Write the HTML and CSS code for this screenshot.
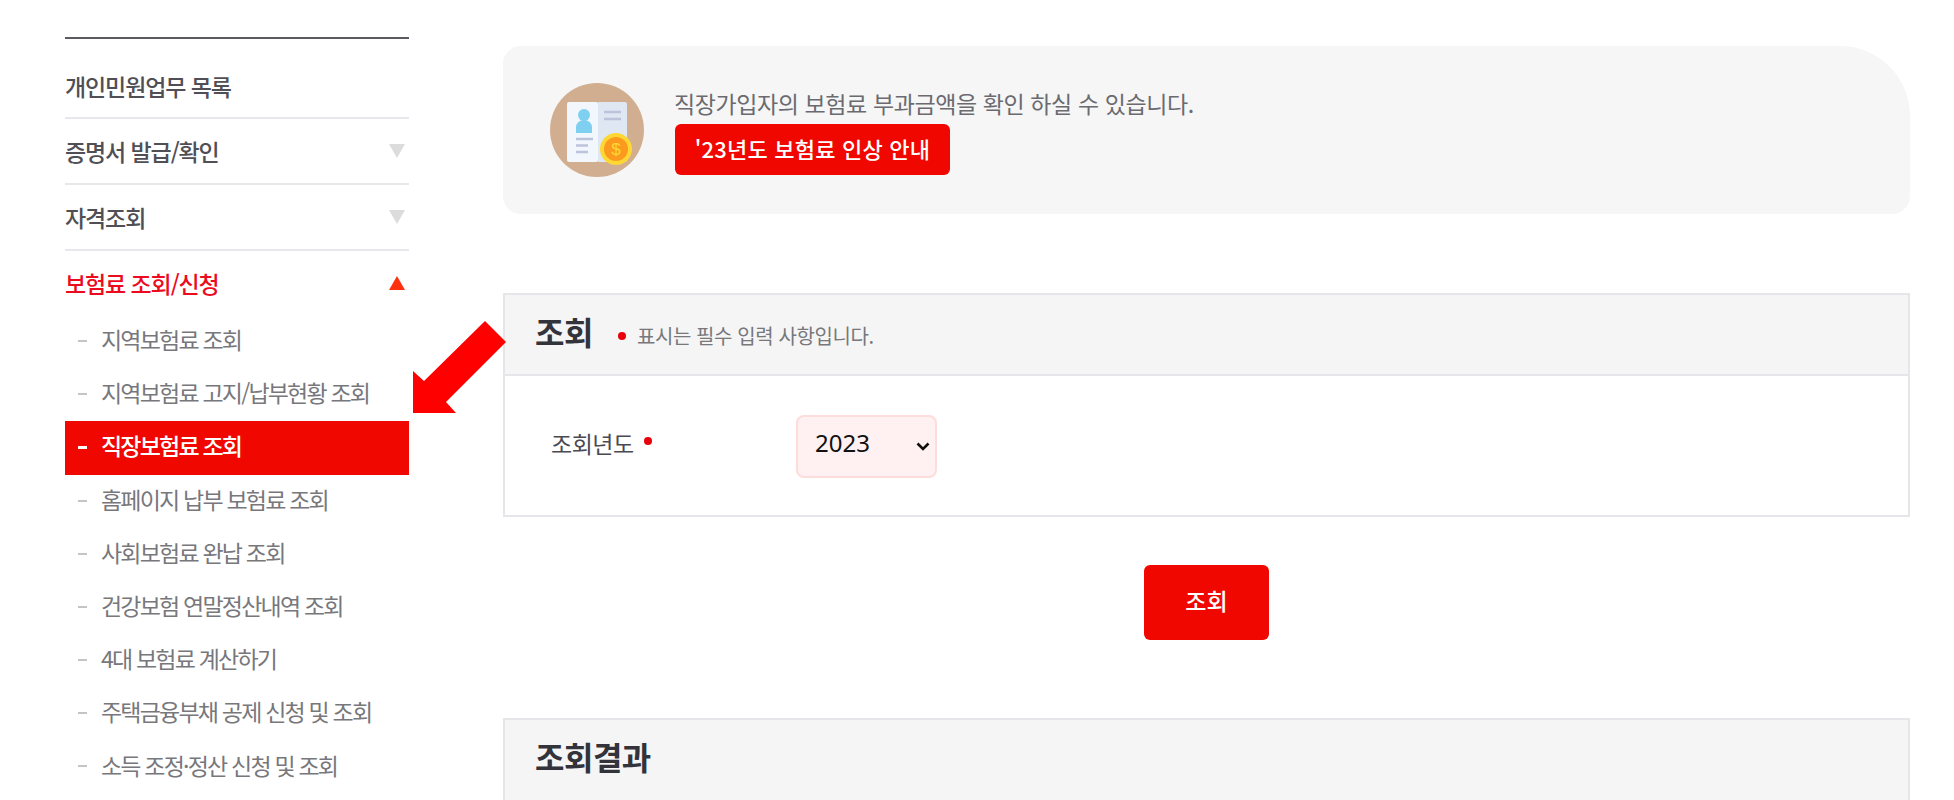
FILE: index.html
```html
<!DOCTYPE html>
<html lang="ko">
<head>
    <meta charset="UTF-8">
    <meta name="viewport" content="width=device-width, initial-scale=1.0">
    <title>직장보험료 조회</title>
    <link rel="stylesheet" href="styles.css">
</head>
<body>
    <div class="page">
        <nav class="sidebar">
            <div class="menu-title">개인민원업무 목록</div>
            <div class="menu-item">증명서 발급/확인<span class="tri tri-down"></span></div>
            <div class="menu-item">자격조회<span class="tri tri-down"></span></div>
            <div class="menu-item menu-open">보험료 조회/신청<span class="tri tri-up"></span></div>
            <ul class="submenu">
                <li>지역보험료 조회</li>
                <li>지역보험료 고지/납부현황 조회</li>
                <li class="active">직장보험료 조회</li>
                <li>홈페이지 납부 보험료 조회</li>
                <li>사회보험료 완납 조회</li>
                <li>건강보험 연말정산내역 조회</li>
                <li>4대 보험료 계산하기</li>
                <li>주택금융부채 공제 신청 및 조회</li>
                <li>소득 조정·정산 신청 및 조회</li>
            </ul>
        </nav>

        <main class="content">
            <div class="banner">
                <svg class="banner-icon" width="94" height="94" viewBox="0 0 94 94">
                    <circle cx="47" cy="47" r="47" fill="#d2ae90"/>
                    <rect x="17" y="19" width="31" height="60" rx="2" fill="#f2f7fd"/>
                    <path d="M48 19h27a2 2 0 0 1 2 2v56a2 2 0 0 1-2 2H48z" fill="#dfe7f3"/>
                    <circle cx="34" cy="32" r="6" fill="#7fd0f0"/>
                    <path d="M26 50v-6c0-4 4-7 8-7s8 3 8 7v6z" fill="#7fd0f0"/>
                    <path d="M26 56h17M26 62.500h12M26 69h12" stroke="#bcc3da" stroke-width="2.500"/>
                    <path d="M54 29h17M54 36h17" stroke="#bcc3da" stroke-width="2.500"/>
                    <circle cx="66" cy="66" r="16" fill="#fdd835"/>
                    <circle cx="66" cy="66" r="12" fill="#fb9a1e"/>
                    <text class="coin-mark" x="66" y="72" text-anchor="middle">$</text>
                </svg>
                <div class="banner-body">
                    <p class="banner-text">직장가입자의 보험료 부과금액을 확인 하실 수 있습니다.</p>
                    <a class="banner-btn">'23년도 보험료 인상 안내</a>
                </div>
            </div>

            <section class="panel search-panel">
                <div class="panel-head">
                    <h3>조회</h3>
                    <span class="required-note"><i class="dot"></i>표시는 필수 입력 사항입니다.</span>
                </div>
                <div class="panel-row">
                    <label class="field-label" for="year">조회년도<i class="dot"></i></label>
                    <select class="year-select" id="year">
                        <option>2023</option>
                    </select>
                </div>
            </section>

            <div class="actions">
                <button class="search-btn">조회</button>
            </div>

            <section class="panel result-panel">
                <div class="panel-head">
                    <h3>조회결과</h3>
                </div>
            </section>
        </main>

        <svg class="pointer" width="94" height="94" viewBox="0 0 94 94">
            <path d="M72 0 93 21 33 81 43 92H0V50L11 60z" fill="#ff0000"/>
        </svg>
    </div>
</body>
</html>
```

FILE: styles.css
```css
* {
    box-sizing: border-box;
}
body {
    margin: 0;
    background: #fff;
    color: #555;
    font-family: "Noto Sans CJK KR", "Noto Sans", sans-serif;
}
.page {
    position: relative;
    display: flex;
    height: 800px;
    overflow: hidden;
    padding-left: 65px;
}
.sidebar {
    width: 344px;
    flex-shrink: 0;
    margin-top: 37px;
    border-top: 2px solid #5a5a60;
}
.menu-title, .menu-item {
    display: flex;
    justify-content: space-between;
    align-items: center;
    height: 66px;
    font-size: 23px;
    font-weight: 500;
    letter-spacing: -1.1px;
    color: #4f4f55;
    border-bottom: 2px solid #e8e8ec;
    padding-right: 4px;
}
.menu-title {
    height: 80px;
    padding-top: 16px;
}
.menu-open {
    color: #ec0a1e;
    border-bottom: none;
    padding-bottom: 3px;
}
.tri {
    width: 0;
    height: 0;
    border-left: 8px solid transparent;
    border-right: 8px solid transparent;
}
.tri-down {
    border-top: 14px solid #dcdcdc;
}
.tri-up {
    border-bottom: 14px solid #ff3010;
}
.submenu {
    list-style: none;
    margin: -2px 0 0;
    padding: 0;
}
.submenu li {
    display: flex;
    align-items: center;
    height: 53.2px;
    padding: 0 0 5px 36px;
    position: relative;
    font-size: 23px;
    letter-spacing: -1.8px;
    color: #77777c;
}
.submenu li::before {
    content: "";
    position: absolute;
    left: 13px;
    top: 47%;
    width: 9px;
    height: 2px;
    background: #c4c4c4;
}
.submenu li.active {
    background: #f00800;
    color: #fff;
    font-weight: 500;
}
.submenu li.active::before {
    background: #fff;
    height: 3px;
}
.content {
    width: 1407px;
    flex-shrink: 0;
    margin-left: 94px;
    padding-top: 46px;
}
.banner {
    display: flex;
    align-items: center;
    height: 168px;
    padding-left: 47px;
    background: #f6f6f6;
    border-radius: 18px 70px 18px 18px;
}
.banner-icon {
    flex-shrink: 0;
}
.coin-mark {
    font-size: 17px;
    font-family: "Liberation Sans", sans-serif;
    fill: #fdd835;
}
.banner-body {
    margin-left: 30px;
}
.banner-text {
    margin: 0 0 4px;
    font-size: 23px;
    line-height: 34px;
    letter-spacing: -0.4px;
    color: #6a6a70;
}
.banner-btn {
    display: inline-block;
    width: 275px;
    height: 51px;
    margin-left: 1px;
    line-height: 48px;
    text-align: center;
    background: #f00800;
    color: #fff;
    font-size: 22px;
    font-weight: 500;
    letter-spacing: 0.2px;
    border-radius: 6px;
}
.panel {
    border: 2px solid #e6e6ea;
}
.search-panel {
    margin-top: 79px;
}
.panel-head {
    display: flex;
    align-items: center;
    height: 79px;
    padding-left: 30px;
    background: #f5f5f5;
}
.result-panel .panel-head {
    height: 100px;
    padding-bottom: 21px;
}
.panel-head h3 {
    margin: 0;
    font-size: 32px;
    font-weight: 700;
    letter-spacing: -0.5px;
    color: #33333b;
    line-height: 1;
    position: relative;
    top: -4px;
}
.required-note {
    display: flex;
    align-items: center;
    margin-left: 25px;
    font-size: 20px;
    letter-spacing: -0.4px;
    color: #77777c;
    position: relative;
    top: 1px;
}
.dot {
    display: inline-block;
    width: 8px;
    height: 8px;
    border-radius: 50%;
    background: #e8000c;
}
.required-note .dot {
    margin-right: 11px;
}
.panel-row {
    display: flex;
    align-items: center;
    height: 141px;
    border-top: 2px solid #e6e6ea;
    padding-left: 46px;
}
.field-label {
    display: flex;
    align-items: center;
    width: 245px;
    font-size: 23px;
    letter-spacing: -0.5px;
    color: #4a4a52;
    padding-bottom: 5px;
}
.field-label .dot {
    margin-left: 10px;
    margin-top: -4px;
}
.year-select {
    appearance: none;
    width: 141px;
    height: 63px;
    margin-top: 2px;
    padding: 0 0 8px 17px;
    background-color: #fff1f1;
    background-image: url("data:image/svg+xml,%3Csvg xmlns='http://www.w3.org/2000/svg' width='14' height='9' viewBox='0 0 14 9'%3E%3Cpath d='M1.500 1.500 7 7l5.500-5.500' fill='none' stroke='%23111' stroke-width='2.600'/%3E%3C/svg%3E");
    background-repeat: no-repeat;
    background-position: right 5px center;
    border: 2px solid #fddcdc;
    border-radius: 8px;
    font-family: "Noto Sans", sans-serif;
    font-size: 24px;
    color: #111;
}
.actions {
    display: flex;
    justify-content: center;
    padding: 48px 0 78px;
}
.search-btn {
    width: 125px;
    height: 75px;
    padding: 0 0 5px;
    border: none;
    border-radius: 6px;
    background: #f00800;
    color: #fff;
    font-family: inherit;
    font-size: 23px;
    font-weight: 500;
}
.pointer {
    position: absolute;
    left: 413px;
    top: 321px;
}
```
